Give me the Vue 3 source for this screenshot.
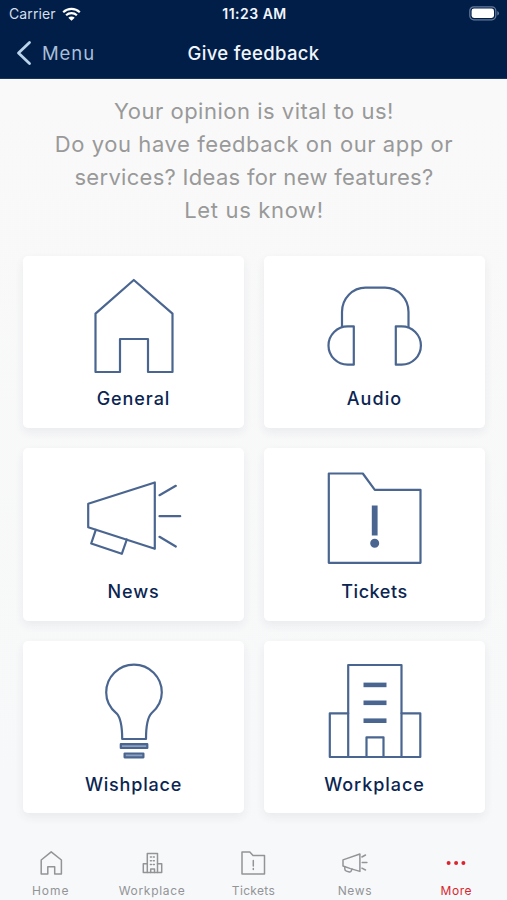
<template>
  <div class="screen">
    <header class="header">
      <div class="status">
        <div class="carrier">
          <span>Carrier</span>
          <svg class="wifi" viewBox="0 0 19 14">
            <path d="M1.2 5.2a12 12 0 0 1 16.6 0M4.1 8.3a7.8 7.8 0 0 1 10.8 0" />
            <path class="solid" d="M6.3 10.7a4.6 4.6 0 0 1 6.4 0L9.5 13.8z" />
          </svg>
        </div>
        <span class="clock">11:23 AM</span>
        <svg class="battery" viewBox="0 0 31 15">
          <rect class="shell" x="0.8" y="0.8" width="26" height="13" rx="4" />
          <rect class="charge" x="2.6" y="2.6" width="22.4" height="9.4" rx="2.4" />
          <path class="tip" d="M28.3 5v4.6q1.7-.7 1.7-2.3T28.3 5z" />
        </svg>
      </div>
      <nav class="nav">
        <button class="back">
          <svg viewBox="0 0 16 26"><path d="M13.5 2.5 2.5 13l11 10.5" /></svg>
          <span>Menu</span>
        </button>
        <h1>Give feedback</h1>
      </nav>
    </header>

    <main class="content">
      <p class="intro">
        <span v-for="line in intro" :key="line.text" :style="{ letterSpacing: line.tracking + 'px' }">{{ line.text }}</span>
      </p>
      <div class="grid">
        <button v-for="card in cards" :key="card.label" class="card">
          <svg viewBox="0 0 100 100">
            <path v-for="d in card.lines" :key="d" :d="d" />
            <path v-for="d in card.fills" :key="d" class="fill" :d="d" />
            <path v-for="d in card.tints" :key="d" class="tint" :d="d" />
          </svg>
          <span :style="{ letterSpacing: card.tracking + 'px' }">{{ card.label }}</span>
        </button>
      </div>
    </main>

    <footer class="tabs">
      <button v-for="tab in tabs" :key="tab.label" :class="['tab', { active: activeTab === tab.label }]" @click="activeTab = tab.label">
        <svg viewBox="0 0 30 30">
          <path v-for="d in tab.lines" :key="d" :d="d" />
          <path v-for="d in tab.dots" :key="d" class="dots" :d="d" />
        </svg>
        <span :style="{ letterSpacing: tab.tracking + 'px' }">{{ tab.label }}</span>
      </button>
    </footer>
  </div>
</template>

<script setup>
import { ref } from 'vue';

const activeTab = ref('More');

const intro = [
  { text: 'Your opinion is vital to us!', tracking: 0.5 },
  { text: 'Do you have feedback on our app or', tracking: 0.57 },
  { text: 'services? Ideas for new features?', tracking: 0.3 },
  { text: 'Let us know!', tracking: 0.65 }
];

const cards = [
  {
    label: 'General',
    tracking: 0.95,
    lines: ['M49.8 4 88.5 37.7V96H64V63H36V96H11.5V37.7z']
  },
  {
    label: 'Audio',
    tracking: 1.1,
    lines: [
      'M17 51V36A23.5 24.3 0 0 1 40.5 11.7H60A23.5 24.3 0 0 1 83.5 36V51',
      'M28.8 50.3V88.7H22.7A19.2 19.2 0 0 1 22.7 50.3z',
      'M70.8 50.3V88.7H76.7A19.2 19.2 0 0 0 76.7 50.3z'
    ]
  },
  {
    label: 'News',
    tracking: 0.9,
    lines: [
      'M4.2 35.8 70.8 14.5V80.8L4.2 59.2z',
      'M11.8 61.8 7.2 75.5 37.8 85.8 42.8 71.5',
      'M75.5 27.2 91.8 17.8M75.5 48.2H96.2M75.5 68.8 91.8 78.5'
    ]
  },
  {
    label: 'Tickets',
    tracking: 0.55,
    lines: ['M3.8 5.5H37.8L49.8 21.8H95.5V94.8H3.8z'],
    fills: ['M46.8 37.5h5.8v30h-5.8z', 'M45.2 75.2a4.5 4.5 0 0 1 9 0a4.5 4.5 0 0 1-9 0z']
  },
  {
    label: 'Wishplace',
    tracking: 0.8,
    lines: ['M38.2 78C38.2 66 37 57 32.5 52.3C26 47 22.2 40 22.2 31.5A27.8 27.8 0 0 1 77.8 31.5C77.8 40 73.5 47 67.5 52.3C63 57 62 66 62 78z'],
    tints: ['M36.8 83.2H63.3V87H36.8z', 'M40.6 92.5H59.4V96.3H40.6z']
  },
  {
    label: 'Workplace',
    tracking: 0.95,
    lines: ['M23.2 96V4H76.5V96', 'M23.2 52.3H4.8V96H95.3V52.3H76.5', 'M41.5 96V76.3H58.5V96'],
    fills: ['M38.5 21.6H61.5v4.6H38.5z', 'M38.5 39.5H61.5v4.6H38.5z', 'M38.5 57.4H61.5v4.6H38.5z']
  }
];

const tabs = [
  { label: 'Home', tracking: 0.95, lines: ['M15.2 3.8 25.4 12V26H18.7V18.8H11.8V26H5.2V12z'] },
  {
    label: 'Workplace',
    tracking: 0.7,
    lines: [
      'M10.3 24.6V5.4H20.5V24.6',
      'M10.3 15.7H6.3V24.6H24.7V15.7H20.5',
      'M13.7 24.6V21H17.5V24.6',
      'M13.4 9h1m1.9 0h1M13.4 12.7h1m1.9 0h1M13.4 16.5h1m1.9 0h1'
    ]
  },
  {
    label: 'Tickets',
    tracking: 0.35,
    lines: ['M4 3.9H11.8L15 7.5H26.5V26H4z', 'M15.3 12.4V18M15.3 20.6V21.6']
  },
  {
    label: 'News',
    tracking: 0.6,
    lines: [
      'M3 11.9 19.9 6V23.4L10.5 20.6 3 18z',
      'M4.8 18.8V21Q4.8 22.6 6.4 23.1L9.4 24Q10.7 24.2 11.2 23L12 21',
      'M21.9 9 25.5 7M22.2 14.6H26.9M21.9 20.2 25.5 22'
    ]
  },
  {
    label: 'More',
    tracking: 0.5,
    dots: ['M5.6 15a2 2 0 0 1 4 0a2 2 0 0 1-4 0zM13.1 15a2 2 0 0 1 4 0a2 2 0 0 1-4 0zM20.4 15a2 2 0 0 1 4 0a2 2 0 0 1-4 0z']
  }
];
</script>

<style>
body {
  background: #f8f8f9;
}
</style>

<style scoped>
.screen {
  height: 100vh;
  display: flex;
  flex-direction: column;
  overflow: hidden;
  background: linear-gradient(#f9f9f9, #f7f8f9);
  font-family: Inter, 'Open Sans', sans-serif;
}
button {
  border: 0;
  padding: 0;
  background: none;
  font: inherit;
  cursor: pointer;
}
svg {
  display: block;
  flex: none;
  fill: none;
  stroke: currentColor;
  stroke-linejoin: round;
  stroke-linecap: round;
}
.header {
  flex: none;
  height: 79px;
  box-sizing: border-box;
  background: #001e48;
  border-bottom: 1px solid #1b3558;
  color: #f1f5fc;
}
.status {
  height: 27px;
  display: grid;
  grid-template-columns: 1fr auto 1fr;
  align-items: center;
  padding: 0 7px 0 9px;
  font-size: 14px;
}
.carrier {
  display: flex;
  align-items: center;
  gap: 6px;
  color: #d5deeb;
  letter-spacing: 0.1px;
}
.wifi {
  width: 19px;
  height: 14px;
  color: #fff;
  stroke-width: 2.2;
  stroke-linecap: butt;
}
.wifi .solid {
  fill: currentColor;
  stroke: none;
}
.clock {
  font-weight: 600;
  letter-spacing: 0.5px;
}
.battery {
  width: 31px;
  height: 15px;
  justify-self: end;
}
.shell {
  stroke: #667a99;
  stroke-width: 1.2;
}
.charge {
  fill: #fff;
  stroke: none;
}
.tip {
  fill: #667a99;
  stroke: none;
}
.nav {
  height: 52px;
  display: grid;
  grid-template-columns: 1fr auto 1fr;
  align-items: center;
  padding: 0 16px;
}
.back {
  display: flex;
  align-items: center;
  gap: 10px;
  color: #a9bfd9;
  font-size: 18.5px;
  letter-spacing: 0.9px;
}
.back svg {
  width: 16px;
  height: 26px;
  color: #b9d3ea;
  stroke-width: 2.8;
}
h1 {
  margin: 0;
  font-size: 18.5px;
  font-weight: 500;
  letter-spacing: 0.35px;
}
.content {
  flex: 1;
  padding: 16px 22px 0 23px;
}
.intro {
  margin: 0 0 28.5px;
  display: flex;
  flex-direction: column;
  align-items: center;
  color: #999;
  font-size: 22px;
  font-weight: 400;
  line-height: 33px;
  white-space: nowrap;
}
.grid {
  display: grid;
  grid-template-columns: 1fr 1fr;
  gap: 20.2px 20px;
}
.card {
  height: 172.5px;
  display: flex;
  flex-direction: column;
  align-items: center;
  padding-top: 20px;
  box-sizing: border-box;
  border-radius: 5px;
  background: #fff;
  box-shadow: 0 4px 10px rgba(40, 60, 80, 0.07);
  color: #0b2552;
  font-size: 18px;
  font-weight: 500;
}
.card svg {
  width: 100px;
  height: 100px;
  margin-bottom: 11.8px;
  color: #4a6690;
  stroke-width: 2.2;
}
.card span {
  line-height: 24px;
}
.fill {
  fill: currentColor;
  stroke: none;
}
.tint {
  fill: #8da0bd;
}
.tabs {
  flex: none;
  height: 61px;
  display: grid;
  grid-template-columns: repeat(5, 1fr);
  background: #f7f8fa;
}
.tab {
  display: flex;
  flex-direction: column;
  align-items: center;
  padding-top: 9px;
  color: #929497;
  font-size: 12px;
}
.tab svg {
  width: 30px;
  height: 30px;
  margin-bottom: 5px;
  stroke-width: 1.5;
}
.tab span {
  line-height: 16px;
}
.tab.active {
  color: #d9262d;
}
.dots {
  fill: currentColor;
  stroke: none;
}
</style>
